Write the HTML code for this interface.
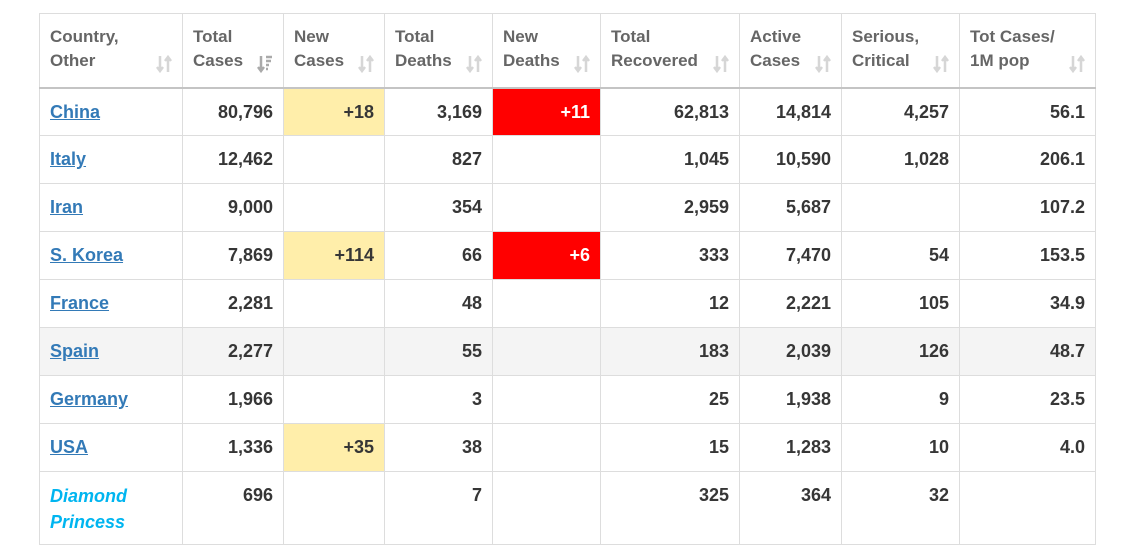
<!DOCTYPE html>
<html><head><style>
body{margin:0;background:#fff;width:1145px;height:546px;overflow:hidden;font-family:"Liberation Sans",Arial,sans-serif;}
table{position:absolute;left:39px;top:13px;border-collapse:collapse;table-layout:fixed;font-weight:bold;font-size:18px;}
td,th{border:1px solid #ddd;padding:0 10px;box-sizing:border-box;}
th{height:74px;color:#666;text-align:left;vertical-align:top;padding-top:11px;line-height:24px;font-weight:bold;font-size:17px;position:relative;border-bottom:2px solid #c4c4c4;box-shadow:0 2px 2px #ddd;}
td{height:48px;color:#363636;text-align:right;vertical-align:top;padding-top:11px;line-height:24px;}
td:first-child{text-align:left;}
a{color:#337ab7;text-decoration:underline;}
.y{background:#ffeeaa;}
.r{background:#ff0000;color:#fff;}
.g td{background:#f4f4f4;}
.dp{color:#00b5f0;font-style:italic;}
svg.s{position:absolute;right:10px;top:40px;}
</style></head><body>
<table>
<colgroup><col style="width:143px"><col style="width:101px"><col style="width:101px"><col style="width:108px"><col style="width:108px"><col style="width:139px"><col style="width:102px"><col style="width:118px"><col style="width:136px"></colgroup>
<tr>
<th>Country,<br>Other<svg class="s" width="16" height="20" viewBox="0 0 16 20"><path d="M4 2v15M1 13l3 4 3-4" stroke="#d6d6d6" stroke-width="2.5" fill="none"/><path d="M12 18V3M9 7l3-4 3 4" stroke="#d6d6d6" stroke-width="2.5" fill="none"/></svg></th>
<th>Total<br>Cases<svg class="s" width="16" height="20" viewBox="0 0 16 20"><path d="M4 2v15M1 13l3 4 3-4" stroke="#aaa" stroke-width="2.5" fill="none"/><path d="M9 3h6M9 7h5M9 11h3M9 15h2" stroke="#aaa" stroke-width="2.5"/></svg></th>
<th>New<br>Cases<svg class="s" width="16" height="20" viewBox="0 0 16 20"><path d="M4 2v15M1 13l3 4 3-4" stroke="#d6d6d6" stroke-width="2.5" fill="none"/><path d="M12 18V3M9 7l3-4 3 4" stroke="#d6d6d6" stroke-width="2.5" fill="none"/></svg></th>
<th>Total<br>Deaths<svg class="s" width="16" height="20" viewBox="0 0 16 20"><path d="M4 2v15M1 13l3 4 3-4" stroke="#d6d6d6" stroke-width="2.5" fill="none"/><path d="M12 18V3M9 7l3-4 3 4" stroke="#d6d6d6" stroke-width="2.5" fill="none"/></svg></th>
<th>New<br>Deaths<svg class="s" width="16" height="20" viewBox="0 0 16 20"><path d="M4 2v15M1 13l3 4 3-4" stroke="#d6d6d6" stroke-width="2.5" fill="none"/><path d="M12 18V3M9 7l3-4 3 4" stroke="#d6d6d6" stroke-width="2.5" fill="none"/></svg></th>
<th>Total<br>Recovered<svg class="s" width="16" height="20" viewBox="0 0 16 20"><path d="M4 2v15M1 13l3 4 3-4" stroke="#d6d6d6" stroke-width="2.5" fill="none"/><path d="M12 18V3M9 7l3-4 3 4" stroke="#d6d6d6" stroke-width="2.5" fill="none"/></svg></th>
<th>Active<br>Cases<svg class="s" width="16" height="20" viewBox="0 0 16 20"><path d="M4 2v15M1 13l3 4 3-4" stroke="#d6d6d6" stroke-width="2.5" fill="none"/><path d="M12 18V3M9 7l3-4 3 4" stroke="#d6d6d6" stroke-width="2.5" fill="none"/></svg></th>
<th>Serious,<br>Critical<svg class="s" width="16" height="20" viewBox="0 0 16 20"><path d="M4 2v15M1 13l3 4 3-4" stroke="#d6d6d6" stroke-width="2.5" fill="none"/><path d="M12 18V3M9 7l3-4 3 4" stroke="#d6d6d6" stroke-width="2.5" fill="none"/></svg></th>
<th>Tot Cases/<br>1M pop<svg class="s" width="16" height="20" viewBox="0 0 16 20"><path d="M4 2v15M1 13l3 4 3-4" stroke="#d6d6d6" stroke-width="2.5" fill="none"/><path d="M12 18V3M9 7l3-4 3 4" stroke="#d6d6d6" stroke-width="2.5" fill="none"/></svg></th>
</tr>
<tr><td><a>China</a></td><td>80,796</td><td class="y">+18</td><td>3,169</td><td class="r">+11</td><td>62,813</td><td>14,814</td><td>4,257</td><td>56.1</td></tr>
<tr><td><a>Italy</a></td><td>12,462</td><td></td><td>827</td><td></td><td>1,045</td><td>10,590</td><td>1,028</td><td>206.1</td></tr>
<tr><td><a>Iran</a></td><td>9,000</td><td></td><td>354</td><td></td><td>2,959</td><td>5,687</td><td></td><td>107.2</td></tr>
<tr><td><a>S. Korea</a></td><td>7,869</td><td class="y">+114</td><td>66</td><td class="r">+6</td><td>333</td><td>7,470</td><td>54</td><td>153.5</td></tr>
<tr><td><a>France</a></td><td>2,281</td><td></td><td>48</td><td></td><td>12</td><td>2,221</td><td>105</td><td>34.9</td></tr>
<tr class="g"><td><a>Spain</a></td><td>2,277</td><td></td><td>55</td><td></td><td>183</td><td>2,039</td><td>126</td><td>48.7</td></tr>
<tr><td><a>Germany</a></td><td>1,966</td><td></td><td>3</td><td></td><td>25</td><td>1,938</td><td>9</td><td>23.5</td></tr>
<tr><td><a>USA</a></td><td>1,336</td><td class="y">+35</td><td>38</td><td></td><td>15</td><td>1,283</td><td>10</td><td>4.0</td></tr>
<tr><td style="height:73px;line-height:26px" class="dp">Diamond<br>Princess</td><td>696</td><td></td><td>7</td><td></td><td>325</td><td>364</td><td>32</td><td></td></tr>
</table>
</body></html>
